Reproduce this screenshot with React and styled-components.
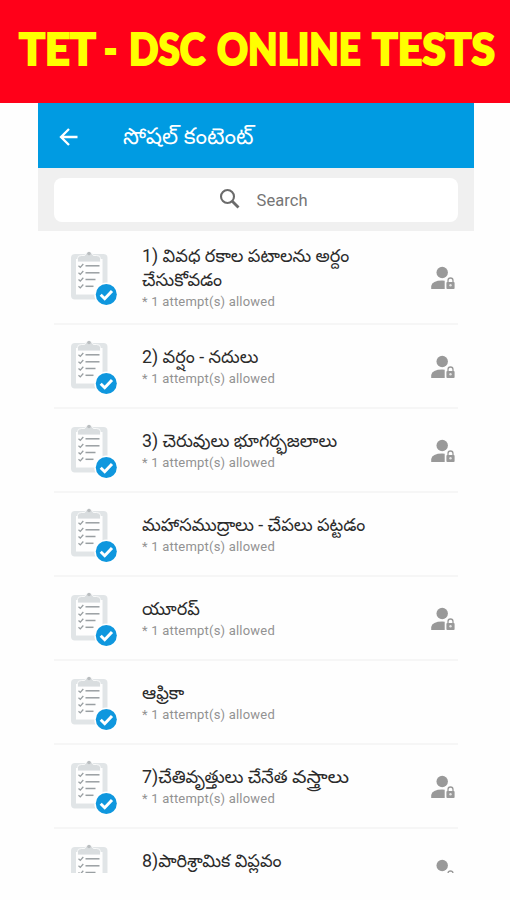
import React from 'react';
import styled, { createGlobalStyle } from 'styled-components';

const GlobalStyle = createGlobalStyle`
    body {
        margin: 0;
        background: #fefefe;
        font-family: Roboto, "Noto Sans Telugu", "Noto Sans", sans-serif;
    }
`;

const Page = styled.div`
    height: 900px;
    overflow: hidden;
`;

const Banner = styled.h1`
    height: 102.5px;
    margin: 0;
    padding-left: 19px;
    box-sizing: border-box;
    display: flex;
    background: #ff0019;
    color: #ffff00;
    font: 900 44px/96px Lato, sans-serif;
`;

const BannerWord = styled.span`
    width: ${props => props.$width}px;
    flex: none;
    white-space: nowrap;
    -webkit-text-stroke: 2px #ffff00;
    transform: scaleX(${props => props.$stretch});
    transform-origin: left;
`;

const Screen = styled.div`
    width: 436px;
    height: 770px;
    margin-left: 37.5px;
    overflow: hidden;
`;

const TopBar = styled.div`
    height: 65.5px;
    padding: 3px 0 0 18px;
    box-sizing: border-box;
    display: flex;
    align-items: center;
    background: #009be2;
    color: #fff;
`;

const BarTitle = styled.div`
    margin-left: 41.5px;
    font-size: 22.7px;
    line-height: 30px;
    white-space: nowrap;
`;

const SearchBar = styled.div`
    height: 62.5px;
    padding: 10px 16px 9px;
    box-sizing: border-box;
    background: #f0f0f0;
`;

const SearchField = styled.div`
    height: 43.5px;
    padding: 1px 0 0 163px;
    box-sizing: border-box;
    display: flex;
    align-items: center;
    gap: 14px;
    border-radius: 8px;
    background: #fff;
    color: #757575;
    font-size: 16.5px;
    letter-spacing: 0.1px;
`;

const List = styled.div`
    padding: 0 16px;
`;

const Row = styled.div`
    height: ${props => (props.$tall ? 94 : 84)}px;
    padding-left: 16px;
    display: flex;
    align-items: center;
    box-sizing: border-box;
    border-bottom: 2px solid #f6f6f6;
`;

const RowText = styled.div`
    width: 260px;
    min-height: 42px;
    margin-left: 22.5px;
    flex: none;
`;

const RowTitle = styled.div`
    color: #2b2b2b;
    font-size: 17.8px;
    line-height: 24px;
    white-space: nowrap;
`;

const TitleLine = styled.div`
    height: 24px;
`;

const WideWord = styled.span`
    display: inline-block;
    transform: scaleX(1.15);
    transform-origin: left;
`;

const Attempts = styled.div`
    padding-top: 1px;
    color: #929292;
    font-size: 13px;
    line-height: 17px;
    letter-spacing: 0.2px;
`;

const LockSlot = styled.div`
    margin-left: auto;
    height: 24px;
    padding-top: 3px;
`;

const bannerWords = [
    { text: 'TET', width: 85, stretch: 0.98 },
    { text: '-', width: 24.5, stretch: 0.8 },
    { text: 'DSC', width: 88.5, stretch: 0.88 },
    { text: 'ONLINE', width: 155, stretch: 0.87 },
    { text: 'TESTS', width: 124, stretch: 0.97 },
];

const rows = [
    { lines: ['1) వివధ రకాల పటాలను అర్దం', 'చేసుకోవడం'], attempts: 1, locked: true },
    { lines: ['2) వర్షం - నదులు'], attempts: 1, locked: true },
    { lines: ['3) చెరువులు భూగర్భజలాలు'], attempts: 1, locked: true },
    { lines: ['మహాసముద్రాలు - చేపలు పట్టడం'], attempts: 1 },
    { lines: ['యూరప్'], attempts: 1, locked: true },
    { lines: ['ఆఫ్రికా'], attempts: 1 },
    { lines: ['7)చేతివృత్తులు చేనేత '], wideWord: 'వస్త్రాలు', attempts: 1, locked: true },
    { lines: ['8)పారిశ్రామిక విప్లవం'], locked: true },
];

const BackArrow = () => (
    <svg width="26" height="26" viewBox="0 0 26 26" fill="none" stroke="#fff" strokeWidth="2.3">
        <path d="M21.5 13H5M13 5L5 13l8 8" />
    </svg>
);

const SearchIcon = () => (
    <svg width="26" height="26" viewBox="0 0 26 26" fill="none" stroke="#6b6b6b">
        <circle cx="10.5" cy="9.5" r="6.5" strokeWidth="2.1" />
        <path d="M15 14L21.5 20.5" strokeWidth="2.8" />
    </svg>
);

const Clipboard = () => (
    <svg width="50" height="60" viewBox="0 0 50 60" fill="none">
        <rect x="3.500" y="9.500" width="31.500" height="40.500" rx="1.5" stroke="#e1e5e7" strokeWidth="5" />
        <path d="M7.500 15v-3.500q0-3 4-3h3.200a4.500 4.500 0 0 1 8.600 0h3.200q4 0 4 3V15z" fill="#d9dddf" stroke="#fff" strokeWidth="0.8" />
        <circle cx="19" cy="6.5" r="1.8" fill="#b9bdbf" />
        {[18.8, 25.8, 32.5, 39.3].map((y, i) => (
            <g key={y} stroke="#999fa2">
                <path d={`M8.5 ${y}l1.8 1.6 3-3.4`} strokeWidth="1.3" />
                <path d={`M15.5 ${y}h${i < 2 ? 14 : i === 2 ? 10 : 8}`} strokeWidth="1.5" />
            </g>
        ))}
        <circle cx="36.3" cy="47.5" r="12" fill="#fff" />
        <circle cx="36.3" cy="47.5" r="10.5" fill="#0f97de" />
        <path d="M30.7 47.8l4 3.9 7.3-7.8" stroke="#fff" strokeWidth="3" />
    </svg>
);

const UserLock = () => (
    <svg width="28" height="24" viewBox="0 0 28 24" fill="#999">
        <circle cx="12.2" cy="6.5" r="5.7" />
        <path d="M1.2 23v-3q1-5.5 11-5.5 1.6 0 2.5.2V23z" />
        <rect x="16.4" y="16" width="8.2" height="7" rx="1" />
        <path d="M18 16.5v-2a2.5 2.5 0 0 1 5 0v2" fill="none" stroke="#999" strokeWidth="1.3" />
        <circle cx="20.5" cy="19.3" r="1.2" fill="#e4e4e4" />
    </svg>
);

const TestRow = ({ lines, wideWord, attempts, locked }) => (
    <Row $tall={lines.length > 1}>
        <Clipboard />
        <RowText>
            <RowTitle>
                {lines.map(line => (
                    <TitleLine key={line}>
                        {line}
                        {wideWord && <WideWord>{wideWord}</WideWord>}
                    </TitleLine>
                ))}
            </RowTitle>
            {attempts && <Attempts>* {attempts} attempt(s) allowed</Attempts>}
        </RowText>
        {locked && <LockSlot><UserLock /></LockSlot>}
    </Row>
);

const App = () => (
    <Page>
        <GlobalStyle />
        <Banner>
            {bannerWords.map(word => (
                <BannerWord key={word.text} $width={word.width} $stretch={word.stretch}>
                    {word.text}
                </BannerWord>
            ))}
        </Banner>
        <Screen>
            <TopBar>
                <BackArrow />
                <BarTitle>సోషల్ కంటెంట్</BarTitle>
            </TopBar>
            <SearchBar>
                <SearchField>
                    <SearchIcon />
                    Search
                </SearchField>
            </SearchBar>
            <List>
                {rows.map(row => (
                    <TestRow key={row.lines[0]} {...row} />
                ))}
            </List>
        </Screen>
    </Page>
);

export default App;
